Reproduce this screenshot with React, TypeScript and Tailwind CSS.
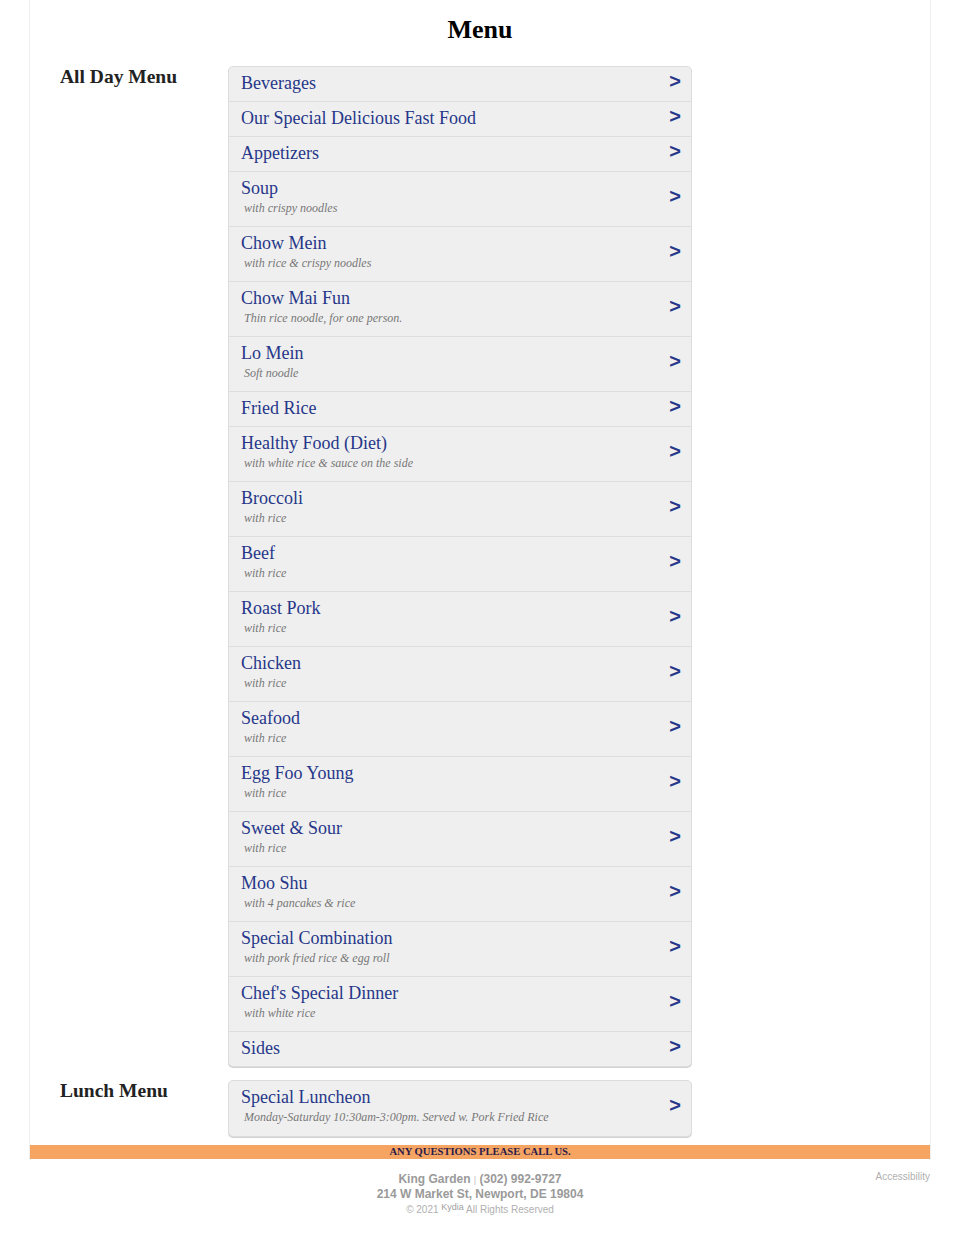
import React from 'react';

type Item = { title: string; note?: string };

const allDay: Item[] = [
  { title: 'Beverages' },
  { title: 'Our Special Delicious Fast Food' },
  { title: 'Appetizers' },
  { title: 'Soup', note: 'with crispy noodles' },
  { title: 'Chow Mein', note: 'with rice & crispy noodles' },
  { title: 'Chow Mai Fun', note: 'Thin rice noodle, for one person.' },
  { title: 'Lo Mein', note: 'Soft noodle' },
  { title: 'Fried Rice' },
  { title: 'Healthy Food (Diet)', note: 'with white rice & sauce on the side' },
  { title: 'Broccoli', note: 'with rice' },
  { title: 'Beef', note: 'with rice' },
  { title: 'Roast Pork', note: 'with rice' },
  { title: 'Chicken', note: 'with rice' },
  { title: 'Seafood', note: 'with rice' },
  { title: 'Egg Foo Young', note: 'with rice' },
  { title: 'Sweet & Sour', note: 'with rice' },
  { title: 'Moo Shu', note: 'with 4 pancakes & rice' },
  { title: 'Special Combination', note: 'with pork fried rice & egg roll' },
  { title: "Chef's Special Dinner", note: 'with white rice' },
  { title: 'Sides' },
];

const lunch: Item[] = [
  { title: 'Special Luncheon', note: 'Monday-Saturday 10:30am-3:00pm. Served w. Pork Fried Rice' },
];

function MenuRow({ item }: { item: Item }) {
  return (
    <div
      className={
        'flex items-center justify-between border-b border-[#dedede] last:border-b-0 pl-3 pr-[10px] cursor-pointer ' +
        (item.note ? 'h-[55px]' : 'h-[35px] last:h-[34px]')
      }
    >
      <div className="self-start pt-[6px]">
        <div className="text-[18px] leading-[21px] text-[#263789]">{item.title}</div>
        {item.note && (
          <div className="pl-[3px] text-[12px] leading-[19px] italic text-[#777]">{item.note}</div>
        )}
      </div>
      <span className="mb-[7px] text-[20px] leading-none font-bold text-[#263789] font-['Liberation_Sans',Arial,sans-serif]">
        &gt;
      </span>
    </div>
  );
}

function Section({ label, items }: { label: string; items: Item[] }) {
  return (
    <div className="flex">
      <h2 className="w-[168px] shrink-0 pt-[1px] text-[19.5px] leading-[20px] font-bold text-[#222]">{label}</h2>
      <div className="w-[464px] rounded-[5px] border border-[#dcdcdc] bg-[#efefef] shadow-[0_1px_0_#d2d2d2] overflow-hidden">
        {items.map((item) => (
          <MenuRow key={item.title} item={item} />
        ))}
      </div>
    </div>
  );
}

export default function App() {
  return (
    <div className="min-h-[1237px] bg-white font-['Liberation_Serif','Times_New_Roman',serif]">
      <div className="mx-auto w-[902px] border-x border-[#eeeeee] pb-[1px]">
        <h1 className="pt-[14px] text-center text-[26px] leading-[32px] font-bold text-black">Menu</h1>
        <div className="mt-[20px] pl-[30px] flex flex-col gap-[13px]">
          <Section label="All Day Menu" items={allDay} />
          <Section label="Lunch Menu" items={lunch} />
        </div>
        <div className="mt-[8px] h-[14px] bg-[#f5a462] text-center text-[10.6px] leading-[14px] font-bold text-[#2c1b4a]">
          ANY QUESTIONS PLEASE CALL US.
        </div>
      </div>
      <footer className="relative mx-auto w-[902px] pt-[12px] text-center font-['Liberation_Sans',Arial,sans-serif]">
        <div className="text-[12px] leading-[14px] font-bold text-[#9a9a9a]">
          King Garden <span className="text-[9px] font-normal text-[#c0c0c0]">|</span> (302) 992-9727
        </div>
        <div className="text-[12px] leading-[14px] font-bold text-[#9a9a9a]">214 W Market St, Newport, DE 19804</div>
        <div className="mt-[2px] text-[10px] leading-[14px] text-[#b0b0b0]">
          © 2021 <span className="relative -top-[3px] text-[9px] text-[#a0a0a0]">Kydia</span> All Rights Reserved
        </div>
        <a className="absolute right-[1px] top-[11px] text-[10px] leading-[12px] text-[#b0b0b0]">Accessibility</a>
      </footer>
    </div>
  );
}
